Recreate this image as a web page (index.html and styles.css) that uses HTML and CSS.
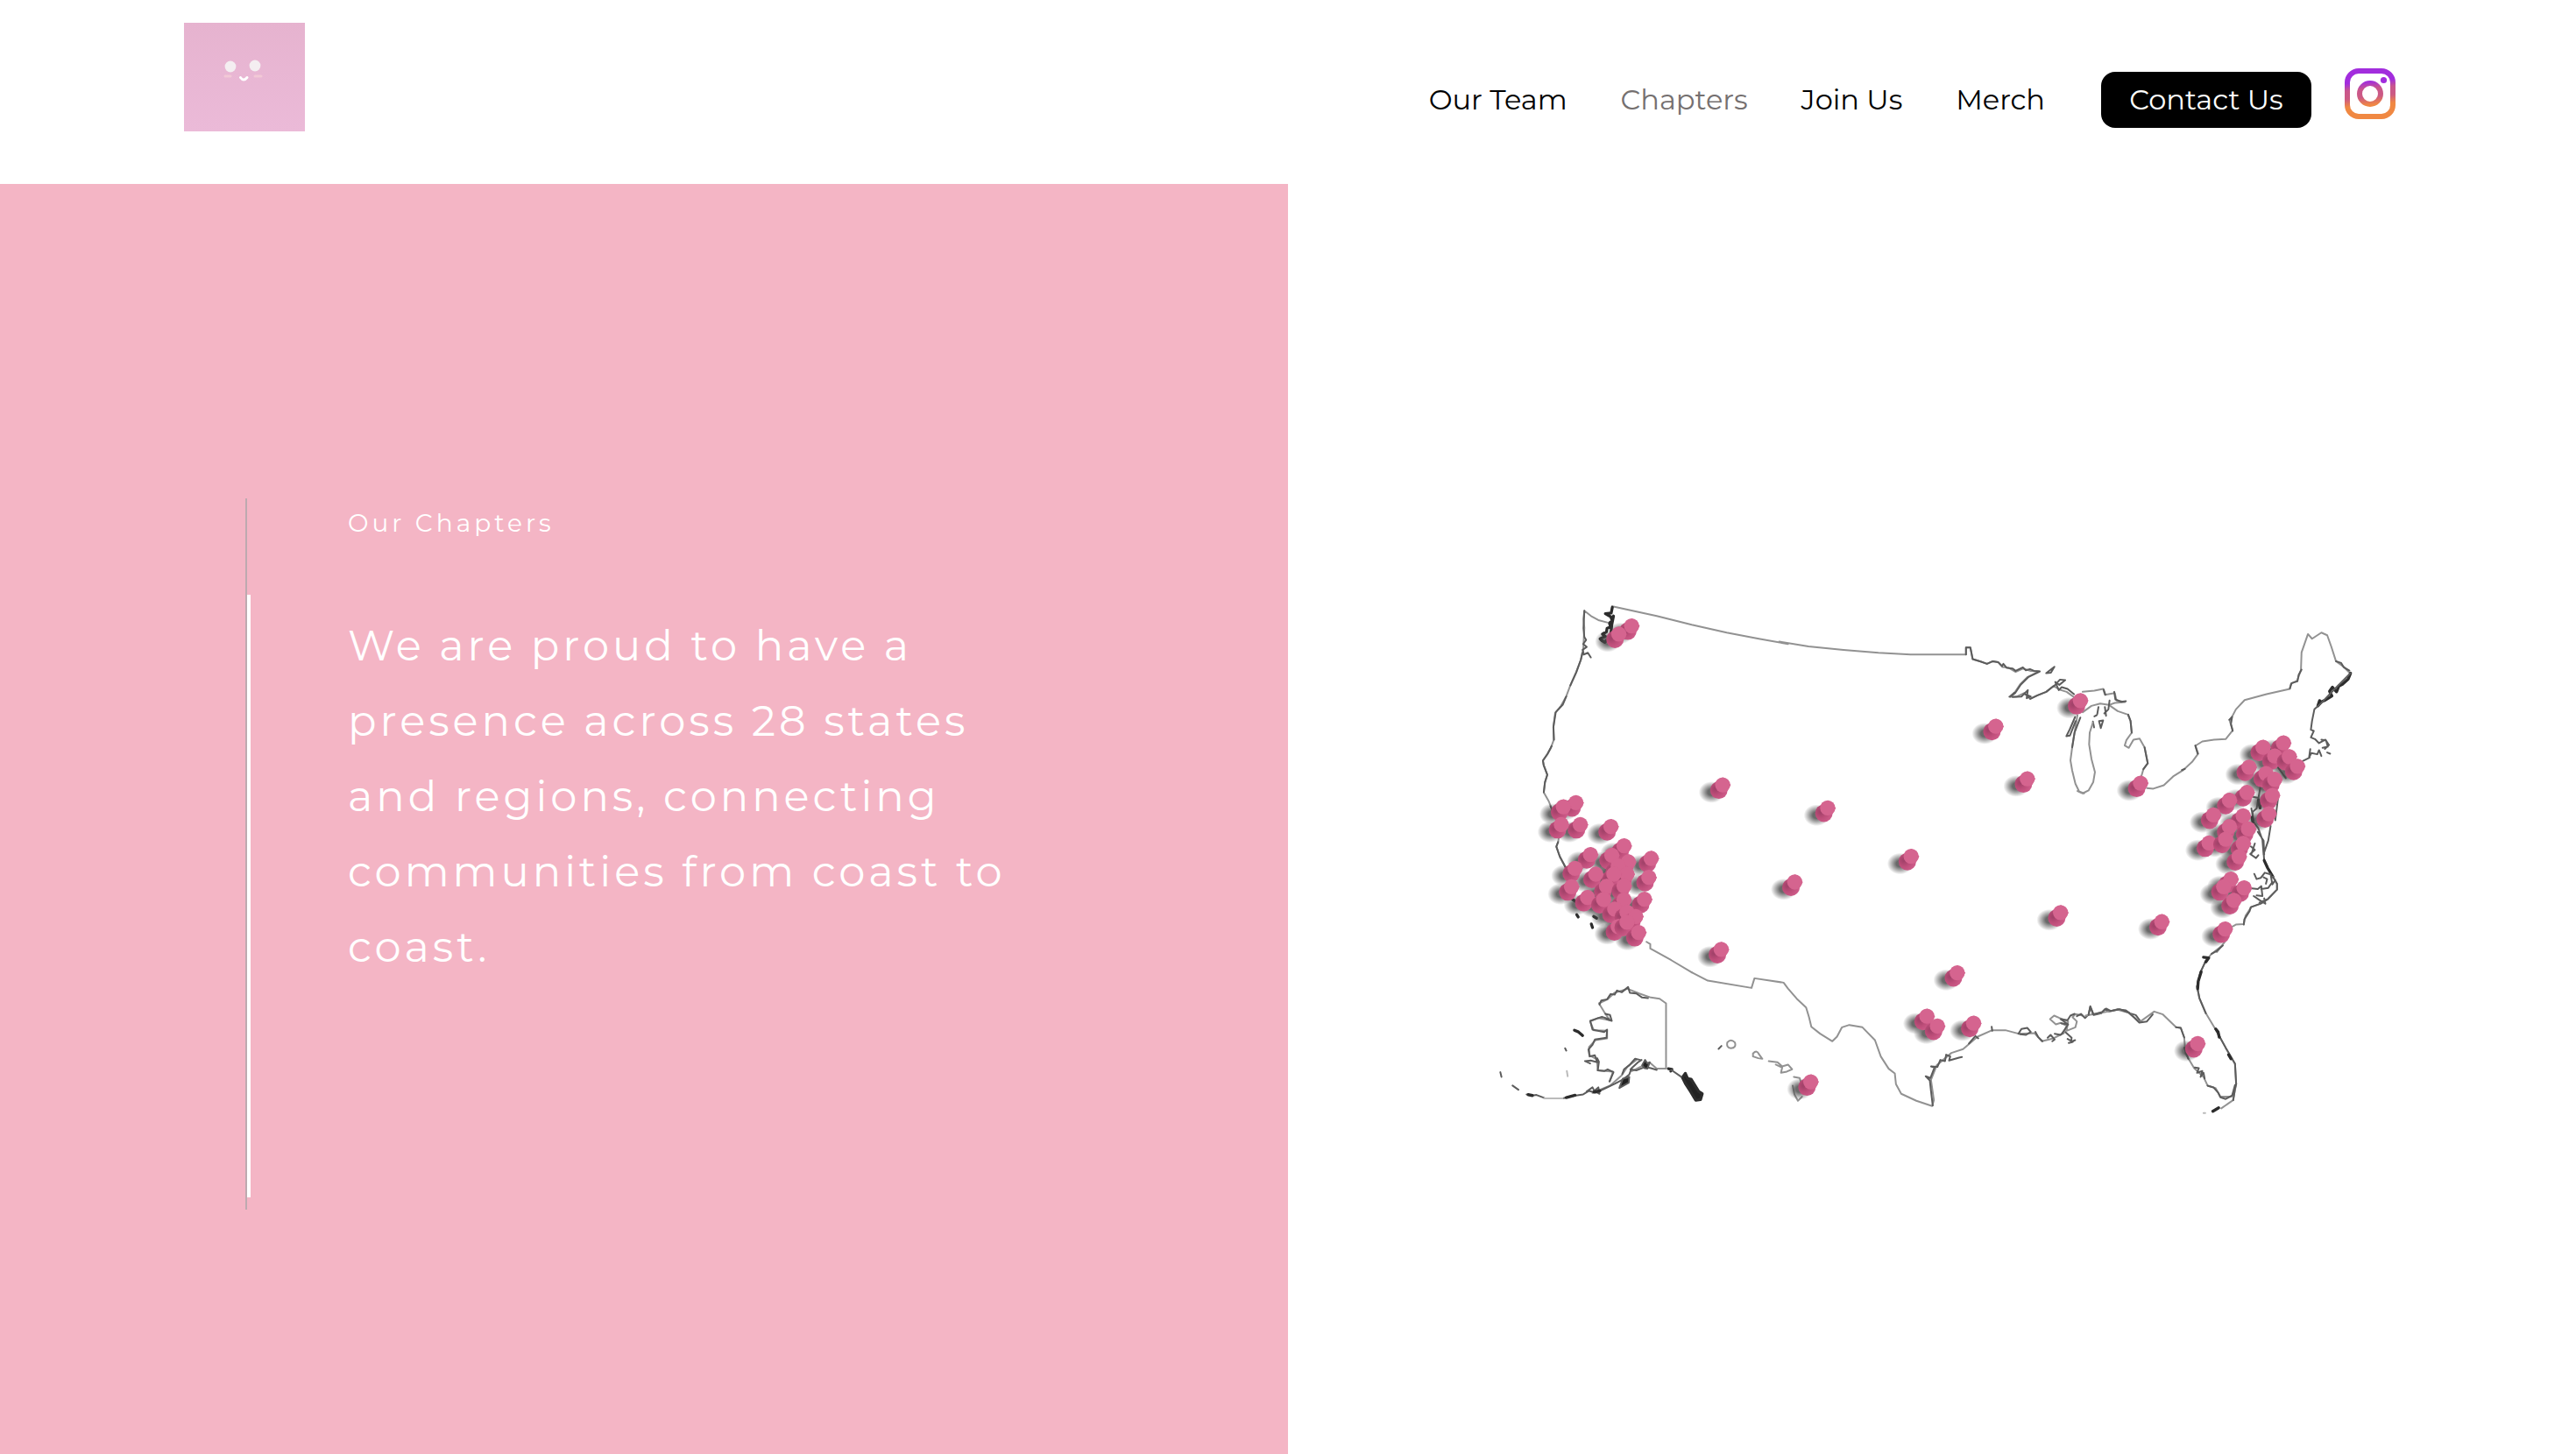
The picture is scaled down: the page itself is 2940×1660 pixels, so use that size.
FILE: index.html
```html
<!DOCTYPE html>
<html lang="en">
<head>
<meta charset="UTF-8">
<meta name="viewport" content="width=device-width, initial-scale=1.0">
<title>Our Chapters</title>
<link rel="stylesheet" href="styles.css">
</head>
<body>
<!-- Header -->
<header class="header">
    <a href="#" class="logo" aria-label="Home">
        <svg viewBox="0 0 138 124">
            <circle cx="53" cy="50" r="6.4" />
            <circle cx="81" cy="49" r="6.4" />
            <path class="smile" d="M64.500 62.500q3.500 5 7.500 0" />
            <path class="blush" d="M47 61h6M81 61h7" />
        </svg>
    </a>
    <div class="header-right">
        <nav class="nav">
            <a href="#">Our Team</a>
            <a href="#" class="active">Chapters</a>
            <a href="#">Join Us</a>
            <a href="#">Merch</a>
            <button type="button" class="contact-button">Contact Us</button>
        </nav>
        <a href="#" class="instagram" aria-label="Instagram">
            <svg viewBox="0 0 58 58">
                <defs>
                    <linearGradient id="instaGradient" gradientUnits="userSpaceOnUse" x1="26" y1="0" x2="32" y2="58">
                        <stop offset="0.26" stop-color="#a22ddd" />
                        <stop offset="0.4" stop-color="#c9568c" />
                        <stop offset="0.56" stop-color="#cc5a83" />
                        <stop offset="0.72" stop-color="#f08842" />
                    </linearGradient>
                </defs>
                <rect x="3" y="3" width="52" height="52" rx="13" />
                <circle cx="29" cy="29" r="12" />
                <circle class="dot" cx="44.500" cy="13.500" r="3.600" />
            </svg>
        </a>
    </div>
</header>

<!-- Chapters -->
<main class="chapters">
    <section class="intro">
        <div class="intro-line"></div>
        <div class="intro-text">
            <h1>Our Chapters</h1>
            <p>We are proud to have a presence across 28 states and regions, connecting communities from coast to coast.</p>
        </div>
    </section>

    <section class="map-container">
        <svg class="map" viewBox="0 0 3090 1920" role="img" aria-label="Map of our chapters">
            <defs>
                <radialGradient id="pinBody" cx="0.3" cy="0.42" r="0.7">
                    <stop offset="0.1" stop-color="#a3426a" />
                    <stop offset="0.5" stop-color="#bd4d79" />
                    <stop offset="1" stop-color="#cf5c8a" />
                </radialGradient>
                <radialGradient id="pinShade">
                    <stop offset="0.3" stop-color="#444" stop-opacity="0.8" />
                    <stop offset="1" stop-color="#444" stop-opacity="0" />
                </radialGradient>
                <ellipse id="shadow" cx="-40" cy="25" rx="44" ry="37" fill="url(#pinShade)" />
                <g id="pin">
                    <circle cx="-15" cy="18" r="30" fill="url(#pinBody)" />
                    <path d="M-22 -14L0 -26L26 0L10 26Z" fill="#cf5c8a" />
                    <circle cx="-2" r="26" fill="#d5648f" />
                </g>
            </defs>

            <!-- West coast and northern border -->
            <g transform="translate(0 -15)">
                <path class="border" d="M448 127L600 160L720 190L840 217L950 238L1050 256" />
                <path class="border" d="M430 182L400 174L375 160L352 142L349 170L352 200L348 280L340 310L325 350L305 395L290 435L272 468L252 492L246 540L247 585L236 615L225 635L210 655L212 670L225 705L217 730L213 765L230 795L244 830L260 870L268 900L262 935L256 950L268 985L290 1025M565 1277L578 1285L578 1300L650 1340L720 1382" />
                <path class="coast" d="M352 142l-3 60l3 30l6 10l-10 14l12 10l-14 10l4 16l14 -6l10 16M345 286l-5 24l-16 44l-20 44M290 436l-12 28l-24 26l-8 50l2 44M240 606l-14 26l-16 24l3 16l12 32l-8 26l-4 34M236 812l20 44M262 935l-6 16l12 34l20 38" />
                <path class="coast heavy" d="M448 130l-4 20l-20 2l18 10l6 14l-10 8l4 14l-12 4l-2 12l-14 8l10 8l-18 8l6 6l10 6l20 -20l4 -40l6 -30" />
                <path class="coast heavy" d="M326 1184l5 8M376 1216l4 12M384 1190l10 6M310 1130l14 10" />
            </g>

            <!-- Great Lakes -->
            <g transform="translate(1020 -15)">
                <path class="border" d="M0 248L100 264L220 276L340 286L450 292L640 292L640 268L655 268L663 308L690 316L712 324L732 315L750 318L765 335L785 337L810 352L835 340L860 348L890 350L850 370L825 395L805 425L788 437L815 436L840 424L860 444L885 432L915 420L940 400L960 412L985 420L1010 438" />
                <path class="coast" d="M640 292v-24h15l8 40l27 8l22 8l20 -9l18 3l14 14l4 -8l12 14l20 2l10 8l25 -12l10 10l14 -4l14 6l20 2l-40 20l-25 25l-20 30l-17 12l14 -14M800 438l30 -2l22 -22l-4 28l14 -6l-20 -8M860 444l25 -12l30 -12l25 -20M915 356l28 -22l-12 20zM940 402l22 -24l18 2l-20 16l-14 -10l12 28l10 -10l20 6l22 18" />
                <path class="border" d="M1022 500L1012 560L1004 610L998 655L1004 690L1015 735L1028 762L1045 768" />
                <path class="coast" d="M1014 506l-18 42l-12 24l12 -2l20 -50M1032 508l-20 52l-8 50" />
            </g>

            <!-- Northeast -->
            <g transform="translate(2040 105)">
                <path class="border" d="M20 300L60 296L90 290L96 310L130 304L136 330L165 335L130 338L110 345L80 340L50 348L20 370M110 345L140 366L175 378L184 400L188 440L170 465L164 484L178 492L194 464L215 460L232 490L243 545L228 565L218 600" />
                <path class="coast" d="M92 292l6 18M128 300l4 26l20 8l16 -2M112 330l-4 30l-14 14M74 352l-4 24M76 400l6 24l8 -26l-14 2M55 402l4 20M60 384l8 -4M96 352l4 30M176 378l8 22l4 40M232 490l11 55l-15 20" />
                <path class="border" d="M55 405L44 440L42 480L50 530L62 575L56 610L40 638L20 648L2 640" />
                <path class="border" d="M240 630L262 632L298 620L330 590L365 568L395 540L416 512L406 485L430 470L470 464L510 462L534 432L524 400L545 360L575 328L650 308L730 290L734 272L755 262L768 225L770 165L792 102L806 118L838 97L858 106L872 145L888 195L912 212L938 238" />
                <path class="coast" d="M522 396l10 -10l-4 24l6 24M406 484l8 28M730 288l6 -18l20 -6l4 -22l10 -18M888 195l18 6l8 14l20 12M360 568l10 -4" />
                <path class="coast heavy" d="M938 236l-8 20l-20 18l-12 6l-8 20l-14 -16l-10 14l8 16l-22 14l-14 6l-12 14l6 -18" />
                <path class="coast" d="M938 236l-60 60l-42 44l-22 20l-8 40l-4 30l10 4l-10 22l14 6l14 14l22 -12l12 18l-14 14M800 496l-4 28l8 -14l20 4l6 -14l8 20M838 464l16 2l6 22l-18 4M858 508l10 4M798 525l-24 12" />
                <path class="coast" d="M690 560l26 36M604 660l18 4l8 28M630 620l-14 80l-14 12l4 36l16 20l14 40l4 50M664 760l-8 50l-16 46M690 660l-10 80M598 700l8 40M620 780l20 30l2 48M596 830l14 12l-16 14l20 14l8 -10M610 820l-12 36M640 850l2 28" />
                <path class="coast heavy" d="M642 878l12 26l18 30M622 672l6 26M600 730l4 20" />
                <path class="coast" d="M608 924l8 18l14 -4l14 -18l20 6l6 34l10 -14M640 936l12 6l-4 16M600 974l20 2l12 -10l4 34l-20 -2M606 1000l20 14l20 12l-4 -18M632 976l24 -4l14 -20M626 1022l24 -10" />
                <path class="border" d="M672 934L686 958L686 978L655 1010L630 1026L598 1038L578 1068L572 1096L545 1098L520 1112M508 1156L480 1192" />
                <path class="coast" d="M672 934l14 24v20l-31 32l-25 16l-34 12l-4 14l-18 28l-2 18" />
            </g>

            <!-- Southern border and Gulf coast -->
            <g transform="translate(1050 975)">
                <path class="border" d="M-330 392L-275 420L-125 445L-115 412L-15 427L0 447L30 482L62 512L72 545L80 578L110 602L152 628L168 612L185 580L210 572L255 580L298 624L318 680L345 722L366 738L370 775L388 808L440 832L494 850L500 830L490 760L510 710L560 668L600 655L650 612L700 590L745 590L790 602L845 600L870 628L910 618L945 600" />
                <path class="coast" d="M496 848l-6 -50l-4 -36l-14 -14l16 6l14 -36l-12 -4l22 2l10 -24l16 4l4 -22l14 6l-4 14l34 -10l10 -2M620 636l22 -26l10 8M698 578l2 14M790 602l10 -16l20 -4l12 14l-16 10l-20 -2M848 596l10 18l14 14M890 616l10 -10l14 16l-8 6M914 602l20 4l14 -12l24 22l-2 14l14 -6" />
                <path class="border" d="M945 600L955 575L935 565L918 570L898 552L912 540L930 548L960 560L955 592L985 580L990 560L975 545L985 535L1010 540" />
                <path class="coast" d="M940 600l20 -30l-26 -18l24 4l10 -16l14 -6M936 566l24 4M958 620l18 10l-14 4M990 542l14 -8l14 14l12 -12l6 -28l12 30l26 -6l12 -14l14 8l30 -8l28 4l14 10l20 6l16 22" />
            </g>

            <!-- Florida and the Atlantic coast -->
            <g transform="translate(2070 1125)">
                <path class="border" d="M0 390L45 382L110 370L148 380L185 412L235 376L265 386L310 430L326 432L338 465L342 520L372 570L404 600L418 630L445 638L462 668L500 668M470 148L430 180L412 202L394 240L382 290L390 330L412 382L448 442L480 500L512 555L516 625L505 680L465 708" />
                <path class="coast" d="M10 388l6 -28l10 26l30 -8l14 -12l16 8l30 -6l32 12l20 18l16 16l26 -4l20 -24M310 430l16 2l12 33M338 500l14 38M374 568l14 2l-6 16l18 -6l-6 20l10 -14l4 20M418 630l20 6l16 18l8 16l18 6l22 -12l10 -36M412 202l-18 38l-12 50l8 40l22 52M448 442l32 58l32 55l4 70l-4 15l-6 40M470 150l-20 18l-18 10" />
                <path class="coast heavy" d="M404 190l18 2l-10 14M396 240l-10 32l-2 26M446 436l8 10l4 18M456 706l-20 12M490 524l8 14" />
                <path class="coast faint" d="M404 724h6" />
            </g>

            <!-- Alaska and Hawaii -->
            <g transform="translate(0 1215)">
                <path class="border" d="M632 480V258L610 242L580 238L540 224L500 208L455 222L432 244L402 258L424 294L440 316L400 308L372 320L384 350L430 352L430 378L390 384L368 408L370 436L395 450L398 488L450 492L440 524M380 565L440 540L480 505L500 475L530 452M632 482L600 482L575 460L545 475L515 490" />
                <path class="coast" d="M404 262l6 -14l20 -4l12 -18l14 2l8 -14l16 6l22 -18l6 20l22 2l20 14l20 2M424 294l16 4l6 20l-18 -6M436 312l-24 -8l-40 14l8 30l40 8l10 -8l-2 28l-40 6l-8 18l-14 16l4 24l18 -4l8 24l-22 -6l-20 2l18 8M396 446l6 12l-4 30l22 2l12 -6l20 10l-14 32" />
                <path class="coast heavy" d="M318 350l14 6l14 12" />
                <path class="coast" d="M286 412l4 8M64 494l4 16M106 540l20 14M154 570l20 4l14 -2l26 10M278 584l30 -8l40 -6l20 -12l24 6l30 -14l34 -16l30 -16l20 -16l8 -22l22 -20l12 -8M360 560l20 -14l6 12l14 -12l4 22l-18 -10M482 500l6 -16l18 -14l20 -22l18 4M510 484l20 4l30 -12l20 4l20 6" />
                <path class="coast heavy" d="M160 571l14 3M290 581l30 -8M385 562l20 -4" />
                <path class="border faint" d="M214 584L278 584M292 490l3 18" />
                <path class="coast fill" d="M472 548l12 -32l22 -6l-2 20zM550 470l10 -18l8 12l8 -4l-8 22l-10 -2z" />
                <path class="coast fill heavy" d="M688 512l10 -14l8 18l12 2l26 42l12 8l-6 20l-16 2l-18 -30l-18 -28zM640 482l12 2l-4 6" />
                <path class="coast" d="M650 486l34 24M812 414l10 -10" />
                <path class="border" d="M842 392q12 -14 26 0q6 18 -14 20q-16 -2 -12 -20M930 430q14 -14 20 2l12 16l-14 -2l-18 -6zM984 456l30 4l16 14l20 -6l14 16l-18 8l-20 4l4 -18l-22 -10M1070 510l20 4l6 20M1066 540l6 30l12 22l14 -14" />
            </g>

            <g id="pinShadows"></g>
            <g id="pins"></g>
        </svg>
    </section>
</main>

<script>
// Chapter pins (x, y on the map)
const chapters = [
    // Washington
    [516, 179], [472, 207],
    // Northern California
    [325, 785], [282, 799], [340, 860], [275, 860], [445, 867],
    // Southern California
    [490, 933], [375, 963], [448, 965], [583, 976], [505, 988], [470, 1002],
    [322, 1010], [500, 1030], [455, 1030], [393, 1030], [575, 1041], [310, 1073],
    [430, 1072], [490, 1070], [365, 1110], [420, 1117], [490, 1118], [560, 1116],
    [458, 1150], [500, 1160], [530, 1175], [470, 1210], [500, 1195], [540, 1230],
    // Mountain and central states
    [828, 724], [823, 1288], [1188, 803], [1075, 1057], [1474, 969], [1764, 523],
    [1872, 703], [2054, 435], [1986, 1162], [1632, 1368], [2260, 718],
    // Texas and Hawaii
    [1528, 1517], [1564, 1551], [1688, 1541], [1130, 1742],
    // Northeast
    [2680, 595], [2750, 580], [2720, 625], [2770, 627], [2798, 660], [2632, 663],
    [2690, 685], [2720, 705], [2625, 750], [2712, 760], [2565, 777], [2510, 827],
    [2612, 830], [2700, 823], [2565, 867], [2630, 875], [2495, 923], [2552, 910],
    [2612, 925], [2598, 970],
    // Southeast
    [2570, 1047], [2615, 1077], [2545, 1073], [2580, 1120], [2333, 1193],
    [2550, 1218], [2456, 1611]
];

function drawPins(groupId, shapeId) {
    const group = document.getElementById(groupId);
    chapters.forEach(([x, y]) => {
        const use = document.createElementNS('http://www.w3.org/2000/svg', 'use');
        use.setAttribute('href', shapeId);
        use.setAttribute('x', x);
        use.setAttribute('y', y);
        group.appendChild(use);
    });
}

drawPins('pinShadows', '#shadow');
drawPins('pins', '#pin');
</script>
</body>
</html>
```
FILE: styles.css
```css
* {
    box-sizing: border-box;
}

body {
    font-family: 'Montserrat', 'Inter', sans-serif;
    font-weight: 400;
    margin: 0;
    min-height: 100vh;
    display: flex;
    flex-direction: column;
    background-color: #ffffff;
    color: #000000;
}

/* Header */
.header {
    display: flex;
    justify-content: space-between;
    align-items: flex-start;
    min-height: 210px;
    padding: 26px 206px 26px 210px;
}

.logo {
    width: 138px;
    height: 124px;
    background: linear-gradient(#e6b3cf, #ebbad8);
}

.logo svg,
.instagram svg {
    display: block;
}

.logo circle {
    fill: #f4eef1;
}

.logo path {
    fill: none;
    stroke-linecap: round;
}

.logo .smile {
    stroke: #ffffff;
    stroke-width: 3;
}

.logo .blush {
    stroke: #f2c8d6;
    stroke-width: 3;
}

.header-right {
    display: flex;
    align-items: flex-start;
    gap: 38px;
    margin-top: 52px;
}

.nav {
    display: flex;
    align-items: center;
    gap: 61px;
    padding-top: 4px;
    font-size: 32px;
}

.nav a {
    padding-bottom: 2px;
    color: #000000;
    text-decoration: none;
}

.nav a.active {
    color: #757070;
}

.contact-button {
    width: 240px;
    height: 64px;
    margin-left: 3px;
    padding: 0 0 2px;
    border: none;
    border-radius: 16px;
    background-color: #000000;
    color: #ffffff;
    font: inherit;
    cursor: pointer;
}

.instagram {
    width: 58px;
}

.instagram rect,
.instagram circle {
    fill: none;
    stroke: url(#instaGradient);
    stroke-width: 6;
}

.instagram .dot {
    fill: #a22ddd;
    stroke: none;
}

/* Chapters */
.chapters {
    flex: 1;
    display: grid;
    grid-template-columns: 1fr 1fr;
}

.intro {
    display: flex;
    align-items: center;
    gap: 111px;
    padding: 80px 280px 0;
    background-color: #f4b5c5;
    color: #ffffff;
}

.intro-line {
    width: 6px;
    height: 812px;
    padding: 110px 0 14px;
    border-left: 2px solid #bdaab0;
    background-color: #ffffff;
    background-clip: content-box;
}

.intro-text {
    width: 770px;
    height: 812px;
}

.intro-text h1 {
    margin: 0;
    padding-top: 10px;
    font-size: 28px;
    font-weight: 400;
    line-height: 36px;
    letter-spacing: 4px;
}

.intro-text p {
    margin: 79px 0 0;
    font-size: 48px;
    font-weight: 400;
    line-height: 86px;
    letter-spacing: 4px;
}

/* Map */
.map-container {
    display: flex;
    align-items: center;
    justify-content: center;
    padding-top: 80px;
}

.map {
    width: 70%;
}

.map path {
    stroke-linejoin: round;
    stroke-linecap: round;
}

.map .border,
.map .coast {
    fill: none;
}

.map .border {
    stroke: #929292;
    stroke-width: 6;
}

.map .coast {
    stroke: #5c5c5c;
    stroke-width: 6;
}

.map .heavy {
    stroke: #2c2c2c;
    stroke-width: 10;
}

.map .fill {
    fill: #222222;
}

.map .faint {
    stroke: #bbbbbb;
}
```
